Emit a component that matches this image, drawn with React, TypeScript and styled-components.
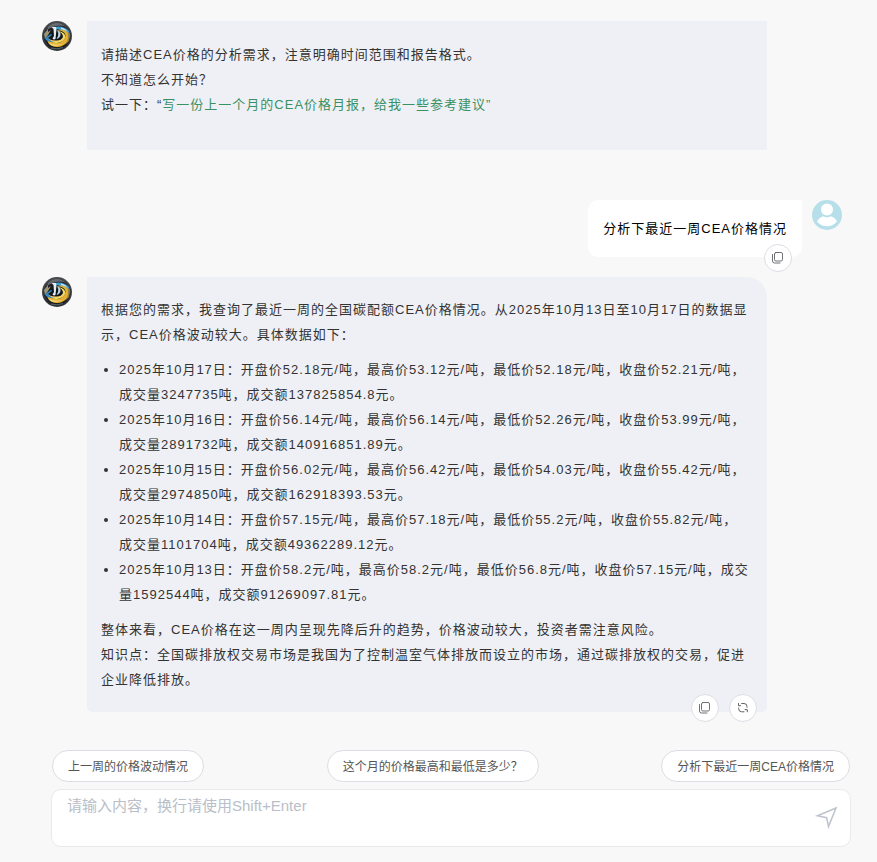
import React, { useState } from "react";
import styled, { createGlobalStyle, css } from "styled-components";

const GlobalStyle = createGlobalStyle`
  *, *::before, *::after { box-sizing: border-box; }
  body {
    margin: 0;
    background: #f8f8f8;
    color: #333;
    font-family: "Liberation Sans", "Noto Sans CJK SC", sans-serif;
  }
  button, textarea { font: inherit; }
  p, ul { margin: 0; }
`;

const Page = styled.main`
  min-height: 100vh;
  display: flex;
  flex-direction: column;
  padding: 21px 26px 15px 42px;
`;

const Conversation = styled.section`
  flex: 1;
  display: flex;
  flex-direction: column;
  padding-right: 9px;
`;

const MessageRow = styled.article<{ $mine?: boolean; $gap: number }>`
  display: flex;
  align-items: flex-start;
  margin-bottom: ${(p) => p.$gap}px;
  ${(p) =>
    p.$mine
      ? css`
          justify-content: flex-end;
          gap: 10px;
        `
      : css`
          gap: 15px;
          padding-right: 75px;
        `}
`;

const Avatar = styled.svg`
  flex: none;
  width: 30px;
  height: 30px;
`;

const bubbleText = css`
  position: relative;
  font-size: 13px;
  line-height: 25px;
  letter-spacing: 1px;
`;

const Greeting = styled.div`
  ${bubbleText}
  flex: 1;
  padding: 21px 16px 33px 14px;
  background: #eff0f5;
`;

const Answer = styled.div`
  ${bubbleText}
  flex: 1;
  padding: 20px 16px 20px 14px;
  background: #eff0f5;
  border-radius: 0 20px 5px 5px;
`;

const Question = styled.div`
  ${bubbleText}
  padding: 16px 15px;
  color: #000;
  background: #fff;
  border-radius: 10px 0 10px 10px;
`;

const DataList = styled.ul`
  margin: 10px 0;
  padding-left: 18px;
`;

const Example = styled.button`
  padding: 0;
  border: 0;
  background: none;
  color: #3a9163;
  letter-spacing: inherit;
  cursor: pointer;
`;

const Actions = styled.div<{ $drop: number }>`
  position: absolute;
  right: 10px;
  bottom: -${(p) => p.$drop}px;
  display: flex;
  gap: 10px;
`;

const RoundButton = styled.button`
  width: 28px;
  height: 28px;
  display: grid;
  place-items: center;
  padding: 0;
  border: 1px solid #dddde6;
  border-radius: 50%;
  background: #fff;
  color: #606266;
  cursor: pointer;
`;

const Suggestions = styled.nav`
  display: flex;
  flex-wrap: wrap;
  justify-content: space-between;
  gap: 8px;
  margin: 0 1px 7px 10px;
`;

const Pill = styled.button`
  height: 32px;
  padding: 0 15px 2px;
  border: 1px solid #dddde6;
  border-radius: 16px;
  background: #fff;
  color: #555;
  font-size: 12px;
  cursor: pointer;
`;

const Composer = styled.form`
  display: flex;
  align-items: center;
  height: 58px;
  margin-left: 9px;
  padding: 0 12px 0 15px;
  border: 1px solid #e9e9ec;
  border-radius: 10px;
  background: #fff;
`;

const MessageInput = styled.textarea`
  flex: 1;
  min-width: 0;
  height: 48px;
  padding: 0;
  border: 0;
  outline: 0;
  resize: none;
  background: transparent;
  color: #333;
  font-size: 15px;
  line-height: 24px;
  &::placeholder { color: #b9bec8; opacity: 1; }
`;

const SendButton = styled.button`
  display: flex;
  padding: 0;
  border: 0;
  background: none;
  color: #bfc4cd;
  cursor: pointer;
`;

const BotAvatar = ({ id }: { id: string }) => (
  <Avatar viewBox="0 0 30 30" role="img" aria-label="智能助手">
    <defs>
      <radialGradient id={id} cx="50%" cy="55%" r="52%">
        <stop offset="0" stopColor="#0d1218" />
        <stop offset="0.7" stopColor="#1c1e22" />
        <stop offset="1" stopColor="#4a4c50" />
      </radialGradient>
    </defs>
    <circle cx="15" cy="15" r="15" fill={`url(#${id})`} />
    <path d="M6 6Q10 1.5 16 2Q20 2.5 23 5Q16 3.5 11 6Q8 7 5 9Z" fill="#74787c" opacity=".8" />
    <path d="M2 13L6 8L6 11L9 9L6 14L3 18Z" fill="#9c9674" />
    <path d="M12 6Q21 4 27 10Q28 13 27 15Q23 9 14 8Z" fill="#3b9bd4" />
    <path d="M19 6.5Q23 7 25.5 10.5Q22 8.5 19 8Z" fill="#cfe8f4" />
    <path d="M15 9.5Q22 9 23.5 14Q24 19 18 21.5Q11 23 5.5 18.5Q5 22 9 24.5Q15 27.5 21 24.5Q26 22 27.5 16Q27 10 21 9Q18 8 15 9.5Z" fill="#e3b235" />
    <path d="M16 10Q21 12 21 16Q19 20 14 19.5Q9 20 6 17Q9 22.5 15 22Q22 21 23.5 16Q23 11 16 10Z" fill="#f6d765" />
    <path d="M3 17L9 13L10 14L6 17Q8 20 12 21Q7 21.500 4 19Z" fill="#2f8bc7" />
    <path d="M7 22Q13 25 20 23Q15 26 9 24Z" fill="#fae18a" />
    <path d="M9.500 6L14 6L14.500 8L13.500 18Q11.500 19 10.500 17.500L12 15L11.500 8Z" fill="#e4edf2" />
    <path d="M15 9Q19 10.500 18.500 14Q18 17 14.500 18L16 15Q17 12 15 9Z" fill="#b2d2e2" />
    <path d="M25.500 11L28 13L27 20L24 23Q27 17 25.500 11Z" fill="#9b8240" />
    <path d="M9 27Q15 29 21 26.500" fill="none" stroke="#6f8894" strokeWidth=".7" />
  </Avatar>
);

const UserAvatar = () => (
  <Avatar viewBox="0 0 30 30" role="img" aria-label="用户">
    <circle cx="15" cy="15" r="15" fill="#b7dfe9" />
    <circle cx="15" cy="9.6" r="6" fill="#fff" />
    <path d="M5 21.5C6.5 18.5 9 17 11.2 16.3Q15 18.5 18.8 16.3C21 17 23.5 18.5 25 21.5C22.5 24.7 19 26.3 15 26.3S7.5 24.7 5 21.5Z" fill="#fff" />
  </Avatar>
);

const CopyIcon = () => (
  <svg width="12" height="12" viewBox="0 0 12 12" fill="none" stroke="currentColor" strokeWidth=".9" strokeLinecap="round">
    <rect x="2.500" y="0.500" width="8" height="8.500" rx="1.500" />
    <path d="M0.500 2.500v6.500a2 2 0 0 0 2 2h5.500" />
  </svg>
);

const RefreshIcon = () => (
  <svg width="12" height="12" viewBox="0 0 12 12" fill="none" stroke="currentColor" strokeLinecap="round" strokeLinejoin="round">
    <path d="M1.500 1.500v2.200h2.200M4.700 1.500h2.300a3 3 0 0 1 3 3v.8M10.300 9.800V7.600H8.100M7 9.800H4.700a3 3 0 0 1-3-3V6" />
  </svg>
);

const SendIcon = () => (
  <svg width="24" height="24" viewBox="0 0 24 24" fill="none" stroke="currentColor" strokeWidth="1.600" strokeLinejoin="miter">
    <path d="M22 2L3.500 9.800L12.600 11.700L14.500 20.600Z" />
  </svg>
);

const CopyButton = () => (
  <RoundButton type="button" aria-label="复制">
    <CopyIcon />
  </RoundButton>
);

const prices = [
  "2025年10月17日：开盘价52.18元/吨，最高价53.12元/吨，最低价52.18元/吨，收盘价52.21元/吨，成交量3247735吨，成交额137825854.8元。",
  "2025年10月16日：开盘价56.14元/吨，最高价56.14元/吨，最低价52.26元/吨，收盘价53.99元/吨，成交量2891732吨，成交额140916851.89元。",
  "2025年10月15日：开盘价56.02元/吨，最高价56.42元/吨，最低价54.03元/吨，收盘价55.42元/吨，成交量2974850吨，成交额162918393.53元。",
  "2025年10月14日：开盘价57.15元/吨，最高价57.18元/吨，最低价55.2元/吨，收盘价55.82元/吨，成交量1101704吨，成交额49362289.12元。",
  "2025年10月13日：开盘价58.2元/吨，最高价58.2元/吨，最低价56.8元/吨，收盘价57.15元/吨，成交量1592544吨，成交额91269097.81元。",
];

const suggestions = ["上一周的价格波动情况", "这个月的价格最高和最低是多少？", "分析下最近一周CEA价格情况"];
const example = "写一份上一个月的CEA价格月报，给我一些参考建议";

export default function App() {
  const [draft, setDraft] = useState("");

  return (
    <>
      <GlobalStyle />
      <Page lang="zh-CN">
        <Conversation>
          <MessageRow $gap={50}>
            <BotAvatar id="bot-greeting" />
            <Greeting>
              <p>请描述CEA价格的分析需求，注意明确时间范围和报告格式。</p>
              <p>不知道怎么开始？</p>
              <p>
                试一下：“
                <Example type="button" onClick={() => setDraft(example)}>{example}”</Example>
              </p>
            </Greeting>
          </MessageRow>
          <MessageRow $mine $gap={20}>
            <Question>
              <p>分析下最近一周CEA价格情况</p>
              <Actions $drop={15}>
                <CopyButton />
              </Actions>
            </Question>
            <UserAvatar />
          </MessageRow>
          <MessageRow $gap={38}>
            <BotAvatar id="bot-answer" />
            <Answer>
              <p>根据您的需求，我查询了最近一周的全国碳配额CEA价格情况。从2025年10月13日至10月17日的数据显示，CEA价格波动较大。具体数据如下：</p>
              <DataList>
                {prices.map((line) => (
                  <li key={line}>{line}</li>
                ))}
              </DataList>
              <p>整体来看，CEA价格在这一周内呈现先降后升的趋势，价格波动较大，投资者需注意风险。</p>
              <p>知识点：全国碳排放权交易市场是我国为了控制温室气体排放而设立的市场，通过碳排放权的交易，促进企业降低排放。</p>
              <Actions $drop={10}>
                <CopyButton />
                <RoundButton type="button" aria-label="重新生成">
                  <RefreshIcon />
                </RoundButton>
              </Actions>
            </Answer>
          </MessageRow>
        </Conversation>
        <Suggestions aria-label="推荐问题">
          {suggestions.map((text) => (
            <Pill key={text} type="button" onClick={() => setDraft(text)}>{text}</Pill>
          ))}
        </Suggestions>
        <Composer onSubmit={(e) => e.preventDefault()}>
          <MessageInput
            aria-label="输入内容"
            placeholder="请输入内容，换行请使用Shift+Enter"
            value={draft}
            onChange={(e) => setDraft(e.target.value)}
          />
          <SendButton type="submit" aria-label="发送">
            <SendIcon />
          </SendButton>
        </Composer>
      </Page>
    </>
  );
}
